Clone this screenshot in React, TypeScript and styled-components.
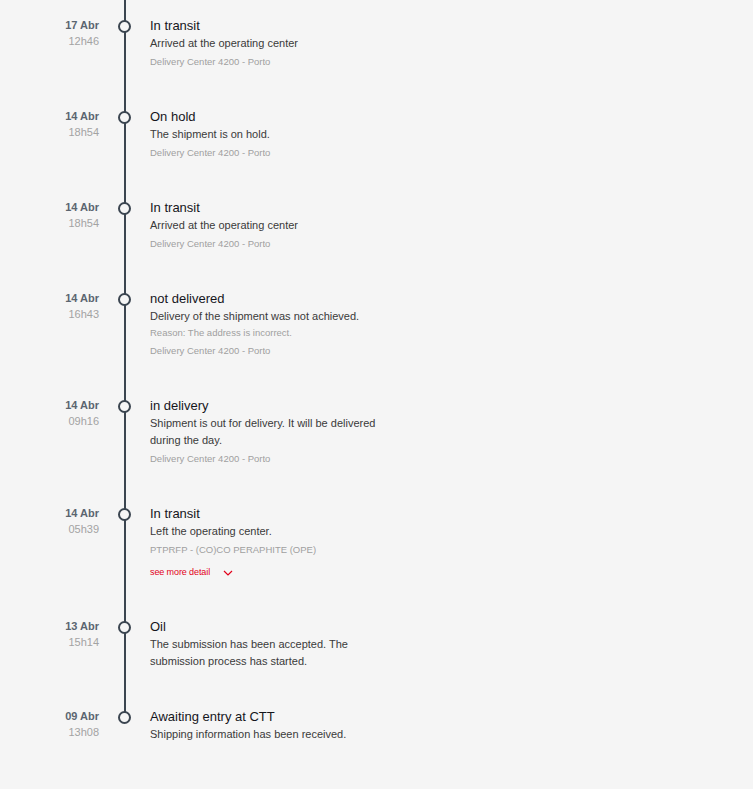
import styled, { createGlobalStyle } from "styled-components";

interface IStep {
  date: string;
  time: string;
  title: string;
  text: string;
  reason?: string;
  place?: string;
  more?: boolean;
}

const STEPS: IStep[] = [
  { date: "17 Abr", time: "12h46", title: "In transit", text: "Arrived at the operating center", place: "Delivery Center 4200 - Porto" },
  { date: "14 Abr", time: "18h54", title: "On hold", text: "The shipment is on hold.", place: "Delivery Center 4200 - Porto" },
  { date: "14 Abr", time: "18h54", title: "In transit", text: "Arrived at the operating center", place: "Delivery Center 4200 - Porto" },
  {
    date: "14 Abr",
    time: "16h43",
    title: "not delivered",
    text: "Delivery of the shipment was not achieved.",
    reason: "Reason: The address is incorrect.",
    place: "Delivery Center 4200 - Porto",
  },
  {
    date: "14 Abr",
    time: "09h16",
    title: "in delivery",
    text: "Shipment is out for delivery. It will be delivered during the day.",
    place: "Delivery Center 4200 - Porto",
  },
  {
    date: "14 Abr",
    time: "05h39",
    title: "In transit",
    text: "Left the operating center.",
    place: "PTPRFP - (CO)CO PERAPHITE (OPE)",
    more: true,
  },
  { date: "13 Abr", time: "15h14", title: "Oil", text: "The submission has been accepted. The submission process has started." },
  { date: "09 Abr", time: "13h08", title: "Awaiting entry at CTT", text: "Shipping information has been received." },
];

const LINE = "#3b4550";

const GlobalStyle = createGlobalStyle`
  html, body {
    margin: 0;
    background: #f5f5f5;
  }
  body {
    font-family: "Liberation Sans", Arial, sans-serif;
  }
`;

const App = () => {
  return (
    <>
      <GlobalStyle />
      <StyledTimeline>
        {STEPS.map((step, i) => (
          <StyledStep key={i}>
            <StyledWhen>
              <StyledDate>{step.date}</StyledDate>
              <StyledTime>{step.time}</StyledTime>
            </StyledWhen>
            <StyledTrack $last={i === STEPS.length - 1}>
              <StyledDot />
            </StyledTrack>
            <StyledBody>
              <StyledTitle>{step.title}</StyledTitle>
              <StyledText>{step.text}</StyledText>
              {step.reason && <StyledReason>{step.reason}</StyledReason>}
              {step.place && <StyledPlace>{step.place}</StyledPlace>}
              {step.more && (
                <StyledMore>
                  see more detail
                  <svg width="10" height="6" viewBox="0 0 10 6" fill="none">
                    <path d="M1 1l4 4 4-4" stroke="currentColor" strokeWidth="1.2" />
                  </svg>
                </StyledMore>
              )}
            </StyledBody>
          </StyledStep>
        ))}
      </StyledTimeline>
    </>
  );
};

export default App;

const StyledTimeline = styled.ol`
  list-style: none;
  margin: 0;
  padding: 0 0 40px;
`;

const StyledStep = styled.li`
  display: grid;
  grid-template-columns: 99px 51px 232px;
`;

const StyledWhen = styled.div`
  padding: 17px 0 21px;
  text-align: right;
  font-size: 11px;
  line-height: 17px;
`;

const StyledDate = styled.div`
  font-weight: 700;
  color: #5b6570;
  line-height: 16px;
`;

const StyledTime = styled.div`
  color: #a3a3a3;
`;

const StyledTrack = styled.div<{ $last: boolean }>`
  display: flex;
  justify-content: center;
  background: linear-gradient(${LINE}, ${LINE}) no-repeat top center;
  background-size: ${({ $last }) => ($last ? "2px 26px" : "2px 100%")};
`;

const StyledDot = styled.span`
  box-sizing: border-box;
  width: 13px;
  height: 13px;
  margin-top: 20px;
  border: 2px solid ${LINE};
  border-radius: 50%;
  background: #f5f5f5;
`;

const StyledBody = styled.div`
  padding: 17px 0 21px;
`;

const StyledTitle = styled.div`
  font-size: 13px;
  line-height: 18px;
  color: #15151c;
`;

const StyledText = styled.div`
  font-size: 11px;
  line-height: 17px;
  color: #3a3a3a;
`;

const StyledReason = styled.div`
  font-size: 9.5px;
  line-height: 16px;
  color: #a0a0a0;
`;

const StyledPlace = styled.div`
  font-size: 9.5px;
  line-height: 17px;
  margin-top: 1px;
  color: #a0a0a0;
`;

const StyledMore = styled.div`
  display: flex;
  align-items: center;
  gap: 13px;
  margin-top: 7px;
  font-size: 9px;
  line-height: 15px;
  color: #e2001a;
  letter-spacing: -0.1px;

  svg {
    margin-top: 1px;
  }
`;
